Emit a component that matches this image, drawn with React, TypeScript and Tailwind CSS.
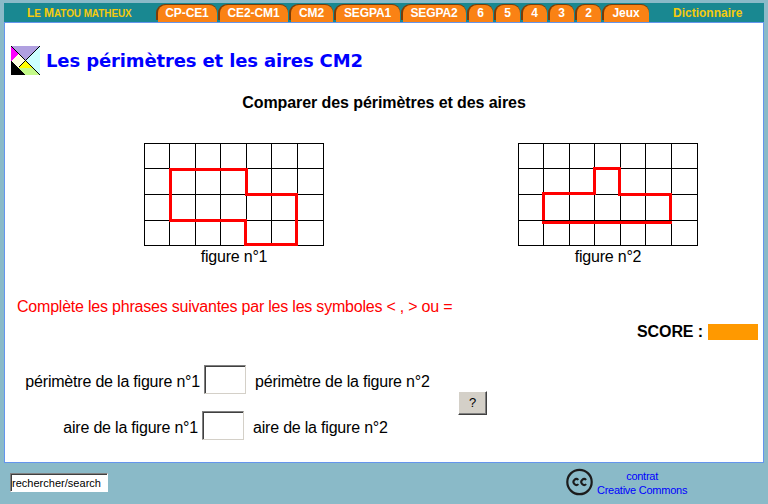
import React from "react";

const tabs = [
  { label: "CP-CE1", box: "w-[62px]" },
  { label: "CE2-CM1", box: "w-[71px]" },
  { label: "CM2", box: "w-[45px]" },
  { label: "SEGPA1", box: "w-[67px]" },
  { label: "SEGPA2", box: "w-[66px]" },
  { label: "6", box: "w-[27px]" },
  { label: "5", box: "w-[27px]" },
  { label: "4", box: "w-[27px]" },
  { label: "3", box: "w-[27px]" },
  { label: "2", box: "w-[27px]" },
  { label: "Jeux", box: "w-[48px]" },
];

function Tab({ label, box }: { label: string; box: string }) {
  return (
    <a className={`${box} h-[18px] shrink-0 pr-px`}>
      <span className="block h-[16px] rounded-tl-[9px] rounded-tr-[8px] bg-[#7a3c08] pl-[2px] pt-[1px]">
        <span className="flex h-[17px] justify-center rounded-t-[8px] bg-[#fa8214] pr-px text-[12px] leading-[16px] font-bold tracking-[-0.1px] text-white">
          {label}
        </span>
      </span>
    </a>
  );
}

function Header() {
  return (
    <header className="flex h-[19px] bg-[#198891] pt-[1px]">
      <div className="w-[152px] shrink-0 pl-[23px] text-[12px] leading-[18px] font-bold tracking-[-0.1px] whitespace-nowrap text-[#f5cb0e]">
        L<span className="text-[10px]">E</span> M<span className="text-[10px]">ATOU MATHEUX</span>
      </div>
      {tabs.map((t) => (
        <Tab key={t.label} {...t} />
      ))}
      <div className="pl-[23px] text-[12px] leading-[18px] font-bold text-[#f5cb0e]">Dictionnaire</div>
    </header>
  );
}

function Logo() {
  return (
    <svg width="29" height="29" viewBox="0 0 29 29" shapeRendering="crispEdges">
      <path d="M0 0H29L14.5 14.5Z" fill="#b0a0e0" />
      <path d="M29 0V29L14.5 14.5Z" fill="#ccffff" />
      <path d="M0 0L7.5 7.5L0 15Z" fill="#ff00ff" />
      <path d="M7.5 7.5L14.5 14.5L7.5 21.5L0 15Z" fill="#ffffe0" />
      <path d="M0 15L14.5 29H0Z" fill="#000" />
      <path d="M14.5 14.5L22 22H7.5Z" fill="#ffff00" />
      <path d="M7.5 22H22L29 29H14.5Z" fill="#c4fa8a" />
      <path d="M0 0L29 29M29 0L7.5 21.5" stroke="#000" fill="none" />
    </svg>
  );
}

const columns = [0, 25, 51, 76, 102, 127, 153, 179];
const rows = [0, 25, 51, 77, 102];

function Figure({ outline, caption, baseOnTop }: { outline: string; caption: string; baseOnTop?: boolean }) {
  return (
    <figure className="w-[180px]">
      <svg width="180" height="103" shapeRendering="crispEdges">
        {columns.map((x) => <rect key={x} x={x} width="1" height="103" />)}
        {rows.map((y) => <rect key={y} y={y} width="180" height="1" />)}
        <path d={outline} stroke="#ff0000" strokeWidth="3" fill="none" />
        {baseOnTop && <rect y="77" width="180" height="1" />}
      </svg>
      <figcaption className="pt-[1px] text-center text-[16px] leading-[20px] tracking-[-0.2px]">{caption}</figcaption>
    </figure>
  );
}

function Answer() {
  return (
    <input className="h-[29px] w-[42px] shrink-0 border border-t-[#808080] border-l-[#808080] border-r-[#d4d0c8] border-b-[#d4d0c8] bg-white shadow-[inset_1px_1px_#404040] outline-none" />
  );
}

export default function App() {
  return (
    <div className="h-[504px] w-[768px] overflow-hidden bg-[#8abac8] px-[4px] pt-[3px] font-['Liberation_Sans',Arial,sans-serif] text-black">
      <Header />
      <main className="h-[441px] border border-[#6495ed] bg-white">
        <div className="flex h-[75px] items-start gap-[6px] pt-[23px] pl-[6px]">
          <Logo />
          <h1 className="font-['DejaVu_Sans',sans-serif] text-[18px] leading-[29px] font-bold tracking-[-0.13px] whitespace-nowrap text-[#0000ff]">
            Les périmètres et les aires CM2
          </h1>
        </div>
        <h2 className="h-[45px] text-center text-[16px] leading-[10px] font-bold tracking-[-0.08px]">
          Comparer des périmètres et des aires
        </h2>
        <div className="flex gap-[194px] pl-[139px]">
          <Figure caption="figure n°1" outline="M26.5 26.5H102.5V51.5H152.5V101.5H101.5V77.5H26.5V25" />
          <Figure baseOnTop caption="figure n°2" outline="M25.5 50.5H76.5V25.5H101.5V51.5H152.5V79.5H25.5V49" />
        </div>
        <p className="mt-[28px] pl-[12px] text-[16px] leading-[24px] tracking-[-0.215px] text-[#ff0000]">
          Complète les phrases suivantes par les les symboles &lt; , &gt; ou =
        </p>
        <div className="mt-[5px] flex h-[16px] items-center justify-end gap-[5px] pr-[5px] text-[16px] leading-[16px] font-bold tracking-[-0.1px]">
          SCORE :<span className="h-[16px] w-[50px] bg-[#ff9900]" />
        </div>
        <div className="mt-[25px] flex">
          <div className="w-[453px] text-[16px] leading-[20px] tracking-[-0.2px] whitespace-nowrap">
            <div className="flex h-[29px] items-center">
              <span className="w-[199px] pt-[4px] pr-[4px] text-right">périmètre de la figure n°1</span>
              <Answer />
              <span className="pt-[4px] pl-[9px]">périmètre de la figure n°2</span>
            </div>
            <div className="mt-[17px] flex h-[29px] items-center">
              <span className="w-[197px] pt-[4px] pr-[4px] text-right">aire de la figure n°1</span>
              <Answer />
              <span className="pt-[4px] pl-[9px]">aire de la figure n°2</span>
            </div>
          </div>
          <button className="mt-[26px] h-[24px] w-[29px] border border-t-white border-l-white border-r-[#404040] border-b-[#404040] bg-[#d4d0c8] text-[13px] leading-[22px] shadow-[inset_-1px_-1px_#808080]">?</button>
        </div>
      </main>
      <footer className="flex items-start">
        <input
          defaultValue="rechercher/search"
          className="mt-[10px] ml-[6px] h-[19px] w-[98px] border border-t-[#808080] border-l-[#808080] border-r-white border-b-white bg-white pl-px text-[11px] tracking-[0.02px] shadow-[inset_1px_1px_#404040] outline-none"
        />
        <div className="mt-[5px] ml-[458px] flex items-start gap-[4px]">
          <svg width="27" height="28" viewBox="0 0 27 28">
            <circle cx="13.5" cy="14" r="12.2" stroke="#1c1c1c" strokeWidth="2.2" fill="none" />
            <path d="M12.4 11.9A2.9 2.9 0 1 0 12.4 16.1M20.2 11.9A2.9 2.9 0 1 0 20.2 16.1" stroke="#1c1c1c" strokeWidth="2" fill="none" />
          </svg>
          <a className="mt-[1px] text-center text-[11px] leading-[14px] tracking-[-0.25px] text-[#0000ff]">
            contrat
            <br />
            Creative Commons
          </a>
        </div>
      </footer>
    </div>
  );
}
